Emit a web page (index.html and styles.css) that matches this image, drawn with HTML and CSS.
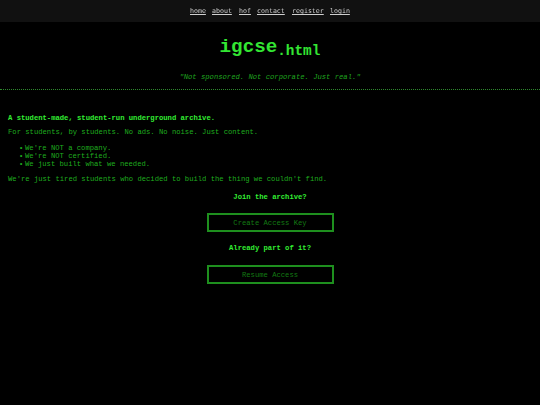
FILE: index.html
```html
<!DOCTYPE html>
<html>
<head>
<meta charset="utf-8">
<link rel="stylesheet" href="styles.css">
</head>
<body>
<nav class="topnav">
  <a href="#">home</a>
  <a href="#">about</a>
  <a href="#">hof</a>
  <a href="#">contact</a>
  <a href="#">register</a>
  <a href="#">login</a>
</nav>
<header class="masthead">
  <h1 class="logo">igcse<span class="ext">.html</span></h1>
  <p class="tagline">"Not sponsored. Not corporate. Just real."</p>
</header>
<main class="content">
  <p class="lead">A student-made, student-run underground archive.</p>
  <p class="text">For students, by students. No ads. No noise. Just content.</p>
  <ul class="points">
    <li>We're NOT a company.</li>
    <li>We're NOT certified.</li>
    <li>We just built what we needed.</li>
  </ul>
  <p class="text">We're just tired students who decided to build the thing we couldn't find.</p>
  <section class="cta">
    <p class="ask">Join the archive?</p>
    <a class="btn" href="#">Create Access Key</a>
    <p class="ask">Already part of it?</p>
    <a class="btn" href="#">Resume Access</a>
  </section>
</main>
</body>
</html>
```

FILE: styles.css
```css
html, body {
  margin: 0;
  padding: 0;
  background: #000;
}
body {
  font-family: "Liberation Mono", "Courier New", monospace;
  color: #1fae1f;
  font-size: 7.2px;
}
.topnav {
  height: 22px;
  background: #111;
  display: flex;
  justify-content: center;
  align-items: center;
  gap: 6.6px;
  font-family: "DejaVu Sans Mono", monospace;
  font-size: 6.6px;
}
.topnav a {
  color: #cfcfcf;
  text-decoration: underline;
  will-change: transform;
}
.masthead {
  text-align: center;
  padding: 14px 0 7px;
  border-bottom: 1px dotted #2e8a2e;
}
.logo {
  margin: 0;
  font-size: 19.2px;
  line-height: 22px;
  font-weight: bold;
  color: #33e633;
}
.logo .ext {
  font-size: 14.4px;
  vertical-align: -3px;
}
.tagline {
  margin: 11px 0 0;
  font-style: italic;
  color: #1fa51f;
  line-height: 9px;
}
.content {
  padding: 24px 8px 0;
}
.lead {
  margin: 0;
  font-weight: bold;
  color: #33ee33;
}
.text {
  margin: 6px 0 0;
}
.points {
  margin: 8px 0 0;
  padding-left: 17px;
  list-style: none;
}
.points li::before {
  content: "•";
  display: inline-block;
  width: 6px;
  margin-left: -6px;
}
.points + .text {
  margin-top: 7px;
}
.cta {
  display: flex;
  flex-direction: column;
  align-items: center;
}
.ask {
  margin: 10px 0 0;
  font-weight: bold;
  color: #33ee33;
}
.btn {
  margin-top: 12px;
  width: 123px;
  height: 15px;
  border: 2px solid #1e8f1e;
  display: flex;
  align-items: center;
  justify-content: center;
  color: #137a13;
  text-decoration: none;
}
.btn + .ask {
  margin-top: 12px;
}
.ask + .btn + .ask + .btn {
  margin-top: 13px;
}
```
